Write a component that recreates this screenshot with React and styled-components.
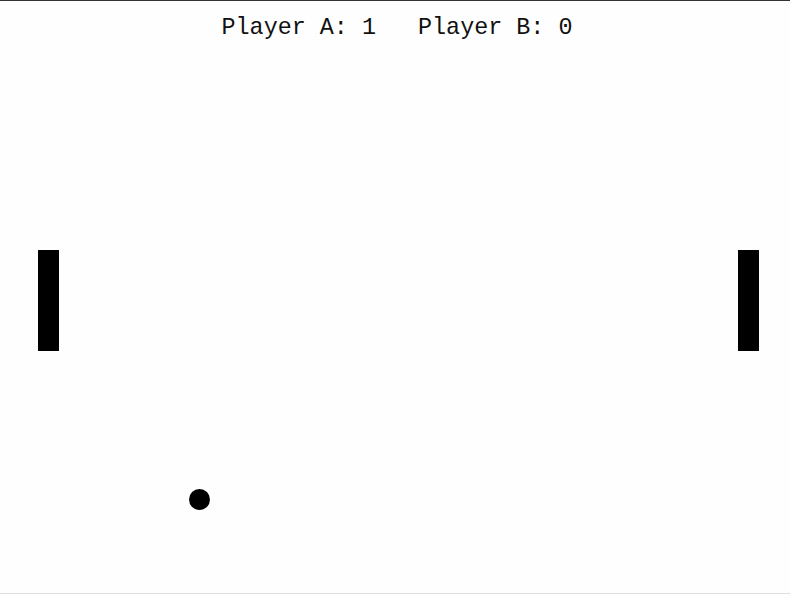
import React from "react";
import styled, { createGlobalStyle } from "styled-components";

const Global = createGlobalStyle`
  html, body { margin: 0; padding: 0; background: #fefefe; }
  #root { height: 594px; }
`

const Court = styled.div`
  position: relative;
  box-sizing: border-box;
  width: 790px;
  height: 594px;
  background: #fefefe;
  border-top: 1px solid #333;
  border-bottom: 1px solid #ddd;
  overflow: hidden;
`

const Score = styled.div`
  padding-top: 14px;
  padding-left: 4px;
  text-align: center;
  font-family: "Liberation Mono", "Courier New", monospace;
  font-size: 23.4px;
  color: #111;
  white-space: pre;
`

const Paddle = styled.div`
  position: absolute;
  top: 249px;
  left: ${(p) => p.x}px;
  width: 21px;
  height: 101px;
  background: #000;
`

const Ball = styled.div`
  position: absolute;
  width: 21px;
  height: 21px;
  border-radius: 50%;
  background: #000;
`

const game = {
  scoreA: 1,
  scoreB: 0,
  ball: { x: 189, y: 488 },
}

export default function App() {
  return (
    <>
      <Global />
      <Court>
        <Score>{`Player A: ${game.scoreA}   Player B: ${game.scoreB}`}</Score>
        <Paddle x={38} />
        <Paddle x={738} />
        <Ball style={{ left: game.ball.x, top: game.ball.y }} />
      </Court>
    </>
  )
}
